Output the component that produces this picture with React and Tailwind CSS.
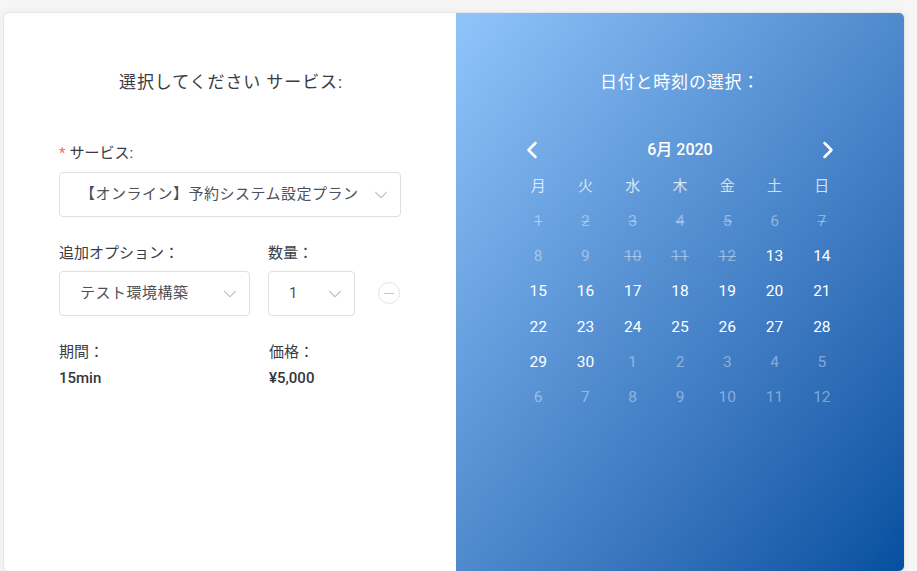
import { ChevronDown, ChevronLeft, ChevronRight } from "lucide-react";

const FONT = { fontFamily: 'Roboto, "Noto Sans CJK JP", sans-serif' };

const WEEKDAYS = ["月", "火", "水", "木", "金", "土", "日"];

// s: strike (past, disabled), d: dimmed (past, no strike), n: next month, a: available
const DAYS = [
  [1, "s"], [2, "s"], [3, "s"], [4, "s"], [5, "s"], [6, "d"], [7, "s"],
  [8, "d"], [9, "d"], [10, "s"], [11, "s"], [12, "s"], [13, "a"], [14, "a"],
  [15, "a"], [16, "a"], [17, "a"], [18, "a"], [19, "a"], [20, "a"], [21, "a"],
  [22, "a"], [23, "a"], [24, "a"], [25, "a"], [26, "a"], [27, "a"], [28, "a"],
  [29, "a"], [30, "a"], [1, "n"], [2, "n"], [3, "n"], [4, "n"], [5, "n"],
  [6, "n"], [7, "n"], [8, "n"], [9, "n"], [10, "n"], [11, "n"], [12, "n"],
];

const SelectBox = ({ value, className = "" }) => (
  <div className={`h-[45px] flex items-center justify-between pl-5 pr-2 border border-[#dcdfe6] rounded-[4px] bg-white ${className}`}>
    <span className="text-[15px] tracking-[0.5px] text-[#4e5058] whitespace-nowrap overflow-hidden">{value}</span>
    <ChevronDown size={22} strokeWidth={1.2} className="text-[#c0c4cc] shrink-0 ml-1" />
  </div>
);

export default function App() {
  return (
    <div className="min-h-[571px] bg-[#f6f6f6] pt-3 pl-[3px]" style={FONT}>
      <div className="w-[902px] h-[560px] flex bg-white border border-[#e6e6e6] rounded-md overflow-hidden shadow-[0_0_8px_rgba(0,0,0,0.05)]">
        {/* Service side */}
        <div className="w-[452px] shrink-0 pt-[57px] pl-[55px] pr-[53px]">
          <h2 className="text-center text-[17px] leading-6 text-[#3a3c44] tracking-[0.9px]">選択してください サービス:</h2>

          <div className="mt-[49px]">
            <label className="block h-5 leading-5 text-[15px] text-[#3a3c44]">
              <span className="text-[#f56c6c] mr-1">*</span>サービス:
            </label>
            <SelectBox value="【オンライン】予約システム設定プラン" className="mt-[9px] w-[342px]" />
          </div>

          <div className="mt-[26px] flex items-end">
            <div className="w-[191px]">
              <label className="block h-5 leading-5 text-[15px] text-[#3a3c44]">追加オプション：</label>
              <SelectBox value="テスト環境構築" className="mt-[8px]" />
            </div>
            <div className="ml-[18px] w-[87px]">
              <label className="block h-5 leading-5 text-[15px] text-[#3a3c44]">数量：</label>
              <SelectBox value="1" className="mt-[8px]" />
            </div>
            <div className="ml-[23px] mb-[12px] w-[22px] h-[22px] rounded-full border border-[#e4e4ea] flex items-center justify-center">
              <span className="block w-[10px] h-px bg-[#f5b0b0]" />
            </div>
          </div>

          <div className="mt-[26px] flex">
            <div className="w-[210px]">
              <div className="h-5 leading-5 text-[15px] text-[#3a3c44]">期間：</div>
              <div className="mt-[6px] h-5 leading-5 text-[15px] font-medium text-[#33363d]">15min</div>
            </div>
            <div>
              <div className="h-5 leading-5 text-[15px] text-[#3a3c44]">価格：</div>
              <div className="mt-[6px] h-5 leading-5 text-[15px] font-medium text-[#33363d]">¥5,000</div>
            </div>
          </div>
        </div>

        {/* Calendar side */}
        <div className="flex-1 bg-linear-to-br from-[#90c5fb] to-[#0350a0] pt-[57px] flex flex-col items-center text-white">
          <h2 className="text-[17px] leading-6 tracking-[0.8px]">日付と時刻の選択：</h2>

          <div className="mt-[44px] w-[331px]">
            <div className="h-6 flex items-center justify-between px-[3px]">
              <ChevronLeft size={28} strokeWidth={2.2} />
              <span className="text-[16px] font-medium">6月 2020</span>
              <ChevronRight size={28} strokeWidth={2.2} />
            </div>

            <div className="mt-[7px] grid grid-cols-7">
              {WEEKDAYS.map((w) => (
                <div key={w} className="h-[35px] flex items-center justify-center text-[15px] text-white/75">{w}</div>
              ))}
              {DAYS.map(([n, t], i) => (
                <div
                  key={i}
                  className={`h-[35.2px] flex items-center justify-center text-[15.5px] ${
                    t === "a" ? "text-white" : "text-white/40"
                  } ${t === "s" ? "line-through" : ""}`}
                >
                  {n}
                </div>
              ))}
            </div>
          </div>
        </div>
      </div>
    </div>
  );
}
